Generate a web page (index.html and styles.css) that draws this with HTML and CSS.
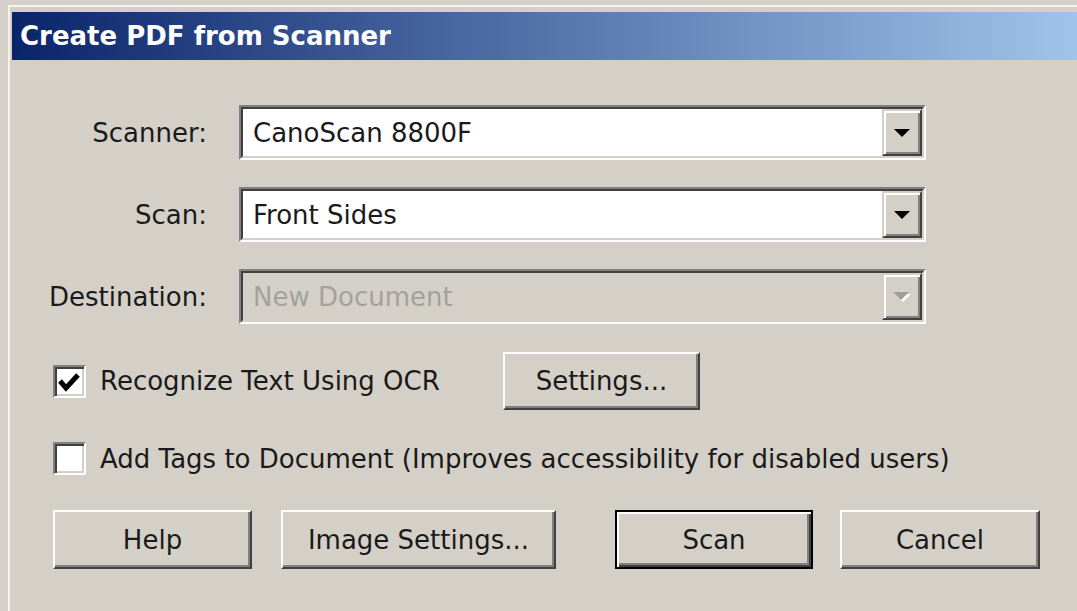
FILE: index.html
```html
<!DOCTYPE html>
<html lang="en">
<head>
<meta charset="utf-8">
<title>Create PDF from Scanner</title>
<link rel="stylesheet" href="styles.css">
</head>
<body>
<div class="window">
  <div class="titlebar">Create PDF from Scanner</div>
  <div class="dialog">
    <div class="form">
      <label class="field-label">Scanner:</label>
      <div class="combo">
        <div class="combo-inner">
          <span class="combo-value">CanoScan 8800F</span>
          <span class="drop-btn"><svg width="16" height="8" viewBox="0 0 16 8"><polygon points="0,0 16,0 8,8" fill="#000"/></svg></span>
        </div>
      </div>

      <label class="field-label">Scan:</label>
      <div class="combo">
        <div class="combo-inner">
          <span class="combo-value">Front Sides</span>
          <span class="drop-btn"><svg width="16" height="8" viewBox="0 0 16 8"><polygon points="0,0 16,0 8,8" fill="#000"/></svg></span>
        </div>
      </div>

      <label class="field-label">Destination:</label>
      <div class="combo disabled">
        <div class="combo-inner">
          <span class="combo-value">New Document</span>
          <span class="drop-btn"><svg width="18" height="10" viewBox="0 0 18 10"><polygon points="2,2 18,2 10,10" fill="#fff"/><polygon points="0,0 16,0 8,8" fill="#a09e99"/></svg></span>
        </div>
      </div>
    </div>

    <div class="option-row first">
      <label class="check-label">
        <span class="checkbox"><svg width="29" height="29" viewBox="0 0 29 29"><polyline points="5,14 11,21 23,8" fill="none" stroke="#000" stroke-width="5"/></svg></span>
        <span>Recognize Text Using OCR</span>
      </label>
      <button class="btn settings">Settings...</button>
    </div>

    <div class="option-row second">
      <label class="check-label">
        <span class="checkbox"></span>
        <span>Add Tags to Document (Improves accessibility for disabled users)</span>
      </label>
    </div>

    <div class="button-row">
      <button class="btn help">Help</button>
      <button class="btn image-settings">Image Settings...</button>
      <button class="btn default scan">Scan</button>
      <button class="btn cancel">Cancel</button>
    </div>
  </div>
</div>
</body>
</html>
```

FILE: styles.css
```css
html, body {
  margin: 0;
  padding: 0;
  background: #d4d0c8;
  overflow: hidden;
}

body {
  font-family: "DejaVu Sans", sans-serif;
  font-size: 26px;
  color: #1a1a1a;
}

.window {
  margin: 5px 0 0 8px;
  padding: 5px 0 0 2px;
  border-top: 2px solid #f4f3ef;
  border-left: 2px solid #f4f3ef;
  height: 600px;
}

.titlebar {
  height: 48px;
  line-height: 48px;
  padding-left: 8px;
  width: 1100px;
  background: linear-gradient(to right, #0a246a 0%, #a6caf0 100%);
  color: #fff;
  font-weight: bold;
  font-size: 26px;
  white-space: nowrap;
}

.dialog {
  padding-top: 45px;
}

.form {
  display: grid;
  grid-template-columns: 195px 687px;
  column-gap: 32px;
  row-gap: 27px;
  align-items: center;
}

.field-label {
  text-align: right;
}

/* sunken combo box */
.combo {
  height: 55px;
  box-sizing: border-box;
  border: 2px solid;
  border-color: #808080 #ffffff #ffffff #808080;
}

.combo-inner {
  height: 100%;
  box-sizing: border-box;
  border: 2px solid;
  border-color: #404040 #d4d0c8 #d4d0c8 #404040;
  background: #ffffff;
  display: flex;
  align-items: center;
  padding-left: 10px;
}

.combo.disabled .combo-inner {
  background: #d4d0c8;
}

.combo.disabled .combo-value {
  color: #a3a19c;
}

.combo-value {
  flex: 1;
  white-space: nowrap;
}

.drop-btn {
  width: 40px;
  height: 100%;
  box-sizing: border-box;
  border: 2px solid;
  border-color: #d4d0c8 #404040 #404040 #d4d0c8;
  box-shadow: inset 2px 2px #ffffff, inset -2px -2px #808080;
  background: #d4d0c8;
  display: flex;
  align-items: center;
  justify-content: center;
}

/* checkbox rows */
.option-row {
  display: flex;
  align-items: center;
  padding-left: 41px;
}

.option-row.first {
  margin-top: 28px;
  height: 58px;
}

.option-row.second {
  margin-top: 32px;
  height: 33px;
}

.check-label {
  display: flex;
  align-items: center;
  gap: 14px;
  white-space: nowrap;
}

.option-row.first .check-label {
  width: 450px;
}

.checkbox {
  width: 33px;
  height: 33px;
  box-sizing: border-box;
  border: 2px solid;
  border-color: #808080 #ffffff #ffffff #808080;
  box-shadow: inset 2px 2px #404040, inset -2px -2px #d4d0c8;
  background: #ffffff;
  display: flex;
  align-items: center;
  justify-content: center;
}

.checkbox svg {
  display: block;
}

/* raised push buttons */
.btn {
  font: inherit;
  color: inherit;
  height: 59px;
  box-sizing: border-box;
  border: 2px solid;
  border-color: #ffffff #404040 #404040 #ffffff;
  box-shadow: inset -2px -2px #808080;
  background: #d4d0c8;
  padding: 0;
  margin: 0;
}

.btn.default {
  border: 2px solid #000000;
  box-shadow: inset 2px 2px #ffffff, inset -2px -2px #404040, inset -4px -4px #808080;
}

.settings {
  width: 197px;
  height: 58px;
}

.button-row {
  display: flex;
  margin-top: 35px;
  padding-left: 41px;
}

.help {
  width: 199px;
}

.image-settings {
  width: 275px;
  margin-left: 29px;
}

.scan {
  width: 198px;
  margin-left: 59px;
}

.cancel {
  width: 200px;
  margin-left: 27px;
}
```
